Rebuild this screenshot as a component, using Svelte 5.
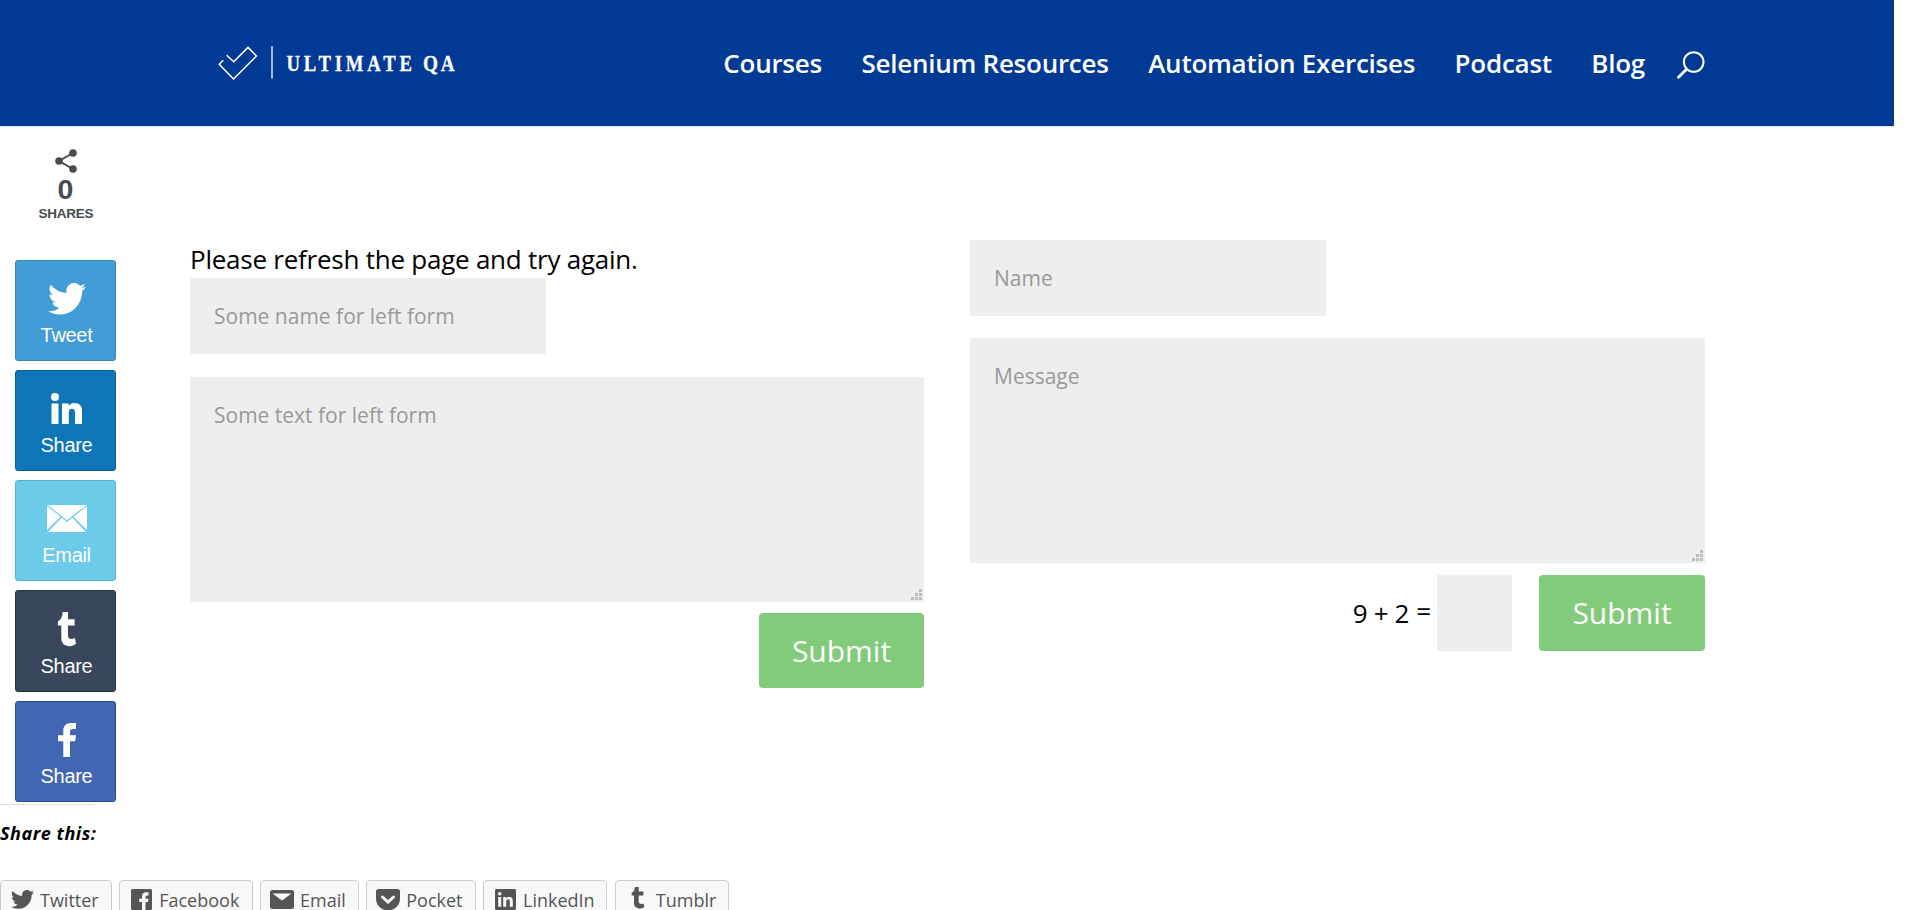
<script>
  const nav = ['Courses', 'Selenium Resources', 'Automation Exercises', 'Podcast', 'Blog'];
  const shares = [
    { icon: 'twitter', label: 'Tweet', bg: '#429cd6', edge: '#3685b5' },
    { icon: 'in', label: 'Share', bg: '#0e76b8', edge: '#0b5f94' },
    { icon: 'mail', label: 'Email', bg: '#6bcbe9', edge: '#56b6cf' },
    { icon: 'tumblr', label: 'Share', bg: '#39475d', edge: '#263242' },
    { icon: 'fb', label: 'Share', bg: '#4267b2', edge: '#2f4b85' }
  ];
  const links = [
    { icon: 'twitter', label: 'Twitter', w: 111.8, iw: 23, pad: 10, gap: 6 },
    { icon: 'fbsq', label: 'Facebook', w: 133.4, iw: 21, pad: 11, gap: 7 },
    { icon: 'mailsq', label: 'Email', w: 98.9, iw: 24, pad: 9, gap: 6 },
    { icon: 'pocket', label: 'Pocket', w: 109.4, iw: 24, pad: 9, gap: 6 },
    { icon: 'insq', label: 'LinkedIn', w: 124.4, iw: 21, pad: 11, gap: 7 },
    { icon: 'tumblr', label: 'Tumblr', w: 114, iw: 21, pad: 12, gap: 7 }
  ];
  const bird = 'M24 2.4a10 10 0 0 1-2.8.8A5 5 0 0 0 23.3.5a10 10 0 0 1-3.1 1.2 4.9 4.9 0 0 0-8.4 4.5A14 14 0 0 1 1.7 1.1a4.9 4.9 0 0 0 1.5 6.6A5 5 0 0 1 1 7.1v.1a4.9 4.9 0 0 0 3.9 4.8 5 5 0 0 1-2.2.1 4.9 4.9 0 0 0 4.6 3.4A9.900 9.900 0 0 1 0 17.500a14 14 0 0 0 7.500 2.200c9.100 0 14.300-7.700 14-14.600A10 10 0 0 0 24 2.400z';
  const tee = 'M6 0h5.500v6.400h7v5.500h-7v8.500q0 5.200 7.300 2.700l1.200 5q-5.500 3.500-10.500 1.500Q4.500 28.200 4.500 23V11.900H1V8.200Q5.500 6.500 6 0z';
</script>

{#snippet glyph(name)}
  {#if name === 'twitter'}
    <svg class="twitter" viewBox="0 0 24 20" preserveAspectRatio="none"><path d={bird} /></svg>
  {:else if name === 'in'}
    <svg class="in" viewBox="0 0 31 31"><circle cx="4" cy="4" r="4" /><path d="M.5 10.500h7V31h-7zM11 10.500h6.500v2.600Q19.500 10 23.500 10 31 10 31 18v13h-7V19.700q0-4-3-4-3.200 0-3.200 4V31H11z" /></svg>
  {:else if name === 'mail'}
    <svg class="mail" viewBox="0 0 40 27"><path d="M.5 0h39L20 15.300zM0 1l13.500 10.700L0 25zM40 1v24L26.500 11.700zM1 27l13.700-14.400L20 17l5.300-4.400L39 27z" /></svg>
  {:else if name === 'tumblr'}
    <svg class="tumblr" viewBox="0 0 21 31" preserveAspectRatio="none"><path d={tee} /></svg>
  {:else if name === 'fb'}
    <svg class="fb" viewBox="0 0 18 34"><path d="M5.300 34V18.300H0v-6h5.300V8Q5.300 0 13 0h5v6h-3.200Q12 6 12 9v3.300h6l-.8 6H12V34z" /></svg>
  {:else if name === 'fbsq'}
    <svg width="21" height="21" viewBox="0 0 21 21"><path d="M1 0h19l1 1v19l-1 1h-5.500v-8H17l.5-3.300h-3V8q0-1.600 1.600-1.600h1.500V3.500Q11 2.600 11 7.500v2.200H8.200V13H11v8H1l-1-1V1z" /></svg>
  {:else if name === 'mailsq'}
    <svg width="24" height="19" viewBox="0 0 24 19"><path d="M2.500 0h19Q24 0 24 2.500v14q0 2.500-2.500 2.500h-19Q0 19 0 16.500v-14Q0 0 2.500 0z" /><path d="M2.500 3.500 12 10.500l9.500-7z" fill="#f8f8f8" /></svg>
  {:else if name === 'pocket'}
    <svg width="24" height="22" viewBox="0 0 24 22"><path d="M2.500 0h19Q24 0 24 2.500V9.500a12 12 0 0 1-24 0V2.500Q0 0 2.500 0z" /><path d="m6.500 8 5.500 5.200L17.500 8" fill="none" stroke="#f8f8f8" stroke-width="3" stroke-linecap="round" stroke-linejoin="round" /></svg>
  {:else}
    <svg width="21" height="21" viewBox="0 0 21 21"><path d="M1 0h19l1 1v19l-1 1H1l-1-1V1z" /><g fill="#f8f8f8"><circle cx="4.700" cy="4.700" r="1.800" /><path d="M3.200 8h3v9.800h-3zM8.200 8H11v1.300q1-1.600 3-1.600 3.800 0 3.800 4.300v5.800h-3v-5.200q0-2.300-1.700-2.300-1.900 0-1.900 2.400v5.100h-3z" /></g></svg>
  {/if}
{/snippet}

{#snippet grip()}
  <svg class="grip" width="11" height="11" viewBox="0 0 11 11"><path d="M8 0h3v3H8zM4 4h3v3H4zM8 4h3v3H8zM0 8h3v3H0zM4 8h3v3H4zM8 8h3v3H8z" /></svg>
{/snippet}

<div class="page">
  <header>
    <svg class="logo" width="240" height="36" viewBox="217 45 240 36">
      <path d="M223.300 60.300 219.200 64.200 233.500 79 256.500 56 248 47.400 233.700 61.700 226.700 55.300" fill="none" stroke="#fff" stroke-width="1.500" />
      <path d="M272 46v32.500" stroke="#c5d2e8" stroke-width="1.700" />
      <text transform="translate(286.500 71) scale(.78 1)" textLength="161">ULTIMATE</text>
      <text transform="translate(423 71) scale(.8 1)" textLength="39.500">QA</text>
    </svg>
    <nav>
      {#each nav as item}<a href="#top">{item}</a>{/each}
      <svg class="search" width="28" height="28" viewBox="0 0 28 28"><circle cx="16.700" cy="11" r="9.800" /><path d="m9.500 18.300-8 8" stroke-width="2.800" stroke-linecap="round" /></svg>
    </nav>
  </header>

  <main>
    <form class="left">
      <p>Please refresh the page and try again.</p>
      <input class="name" placeholder="Some name for left form" />
      <div class="area"><textarea placeholder="Some text for left form"></textarea>{@render grip()}</div>
      <div class="actions"><button type="button">Submit</button></div>
    </form>
    <form class="right">
      <input class="name" placeholder="Name" />
      <div class="area"><textarea placeholder="Message"></textarea>{@render grip()}</div>
      <div class="actions">
        <span class="sum">9 + 2</span><span class="eq">=</span><input class="captcha" aria-label="Answer" /><button type="button">Submit</button>
      </div>
    </form>
  </main>

  <section class="sharing">
    <h3>Share this:</h3>
    <ul>
      {#each links as l}
        <li style="width:{l.w}px;padding-left:{l.pad}px;gap:{l.gap}px"><span class="ico" style="width:{l.iw}px">{@render glyph(l.icon)}</span>{l.label}</li>
      {/each}
    </ul>
  </section>

  <aside>
    <div class="count">
      <svg width="22" height="24" viewBox="0 0 22 24"><path d="M18 4 4 12l14 8" fill="none" stroke="#474b4d" stroke-width="2" /><circle cx="18" cy="4" r="3.800" /><circle cx="4" cy="12" r="3.800" /><circle cx="18" cy="20" r="3.800" /></svg>
      <b>0</b><small>SHARES</small>
    </div>
    {#each shares as s}
      <div class="tile" style="background:{s.bg};border-color:{s.edge}">
        <span class="pic">{@render glyph(s.icon)}</span><span class="lbl">{s.label}</span>
      </div>
    {/each}
  </aside>
</div>

<style>
  :global(body) { margin: 0; overflow: hidden; }
  * { box-sizing: border-box; }
  .page { position: relative; width: 1920px; height: 910px; overflow: hidden; background: #fff; color: #000; font-family: 'Open Sans', sans-serif; }
  header { width: 1894px; height: 126px; padding: 0 189px 0 217px; display: flex; justify-content: space-between; align-items: center; background: #003a95; box-shadow: 0 1px 0 rgba(0, 0, 0, .1); }
  .logo text { font: bold 24px 'Liberation Serif', serif; fill: #fff; stroke: #fff; stroke-width: .3; }
  nav { display: flex; align-items: center; }
  nav a { margin-right: 39.500px; color: #fff; font-size: 26px; line-height: 36px; font-weight: 600; letter-spacing: -.25px; text-decoration: none; white-space: nowrap; }
  nav a:nth-of-type(5) { margin-right: 32px; }
  .search { fill: none; stroke: #fff; stroke-width: 2; margin-top: 3px; }
  main { display: grid; grid-template-columns: 734px 735px; column-gap: 46px; padding: 114px 0 0 190px; height: 678px; }
  form { display: flex; flex-direction: column; align-items: flex-start; }
  p { margin: 0; height: 38px; font-size: 26px; line-height: 38px; letter-spacing: -.24px; white-space: nowrap; }
  input, textarea { display: block; margin: 0; padding: 24px; border: 0; border-radius: 0; outline: 0; background: #eee; font: 21px/28px 'Open Sans', sans-serif; color: #999; resize: none; }
  ::placeholder { color: #999; opacity: 1; }
  .name { width: 356px; height: 76px; }
  .area { position: relative; width: 100%; height: 225px; margin-top: 23px; }
  .right .area { margin-top: 22px; }
  textarea { width: 100%; height: 100%; }
  .grip { position: absolute; right: 2px; bottom: 2px; fill: #bdbdbd; }
  .actions { align-self: stretch; display: flex; justify-content: flex-end; margin-top: 11px; font-size: 26px; line-height: 76px; }
  .right .actions { margin-top: 12px; }
  button { width: 165px; height: 75px; padding: 0; border: 0; border-radius: 4px; background: #81cb7a; color: #fff; font: 30px/75px 'Open Sans', sans-serif; }
  .right button { width: 166px; height: 76px; padding-bottom: 1px; }
  .sum { letter-spacing: -.35px; }
  .eq { margin: -2px 6px 0 7px; }
  .captcha { width: 75px; height: 76px; margin-right: 27px; }
  h3 { width: 95px; height: 59px; margin: 0; padding-top: 16px; border-top: 1px solid #ddd; font-size: 18px; line-height: 25px; font-style: italic; font-weight: 700; letter-spacing: .52px; white-space: nowrap; }
  ul { display: flex; gap: 7.400px; margin: 17px 0 0; padding: 0; list-style: none; }
  li { flex: none; display: flex; align-items: center; height: 42px; padding: 0 0 3px 10px; border: 1px solid #ccc; border-radius: 4px; background: #f8f8f8; color: #555; font-size: 18px; white-space: nowrap; }
  .ico { flex: none; display: flex; justify-content: center; fill: #555; }
  .ico .twitter { width: 23px; height: 19px; }
  .ico .tumblr { width: 14px; height: 22px; margin-top: -3px; }
  aside { position: absolute; left: 15px; top: 126px; width: 101px; font-family: 'Liberation Sans', Arial, sans-serif; }
  .count { height: 134px; padding-top: 23px; display: flex; flex-direction: column; align-items: center; color: #474b4d; fill: #474b4d; }
  b { font-size: 28.500px; line-height: 31px; margin-top: 1px; }
  small { font-size: 13.500px; font-weight: 700; line-height: 17px; letter-spacing: -.25px; margin-left: 1px; }
  .tile { height: 101px; margin-bottom: 9px; padding: 20px 0 0 2px; border: 1px solid; border-radius: 3px; display: flex; flex-direction: column; align-items: center; color: #fff; fill: #fff; font-size: 20px; line-height: 24px; }
  .tile:nth-child(5) { height: 102px; padding-top: 21px; }
  .lbl { letter-spacing: -.3px; }
  .pic { height: 35px; display: flex; align-items: center; justify-content: center; margin-bottom: 7px; }
  .pic .twitter { width: 38px; height: 32px; }
  .pic .in { width: 31px; height: 31px; }
  .pic .mail { width: 40px; height: 27px; }
  .pic .tumblr { width: 20px; height: 35px; }
  .pic .fb { width: 18px; height: 34px; }
</style>
